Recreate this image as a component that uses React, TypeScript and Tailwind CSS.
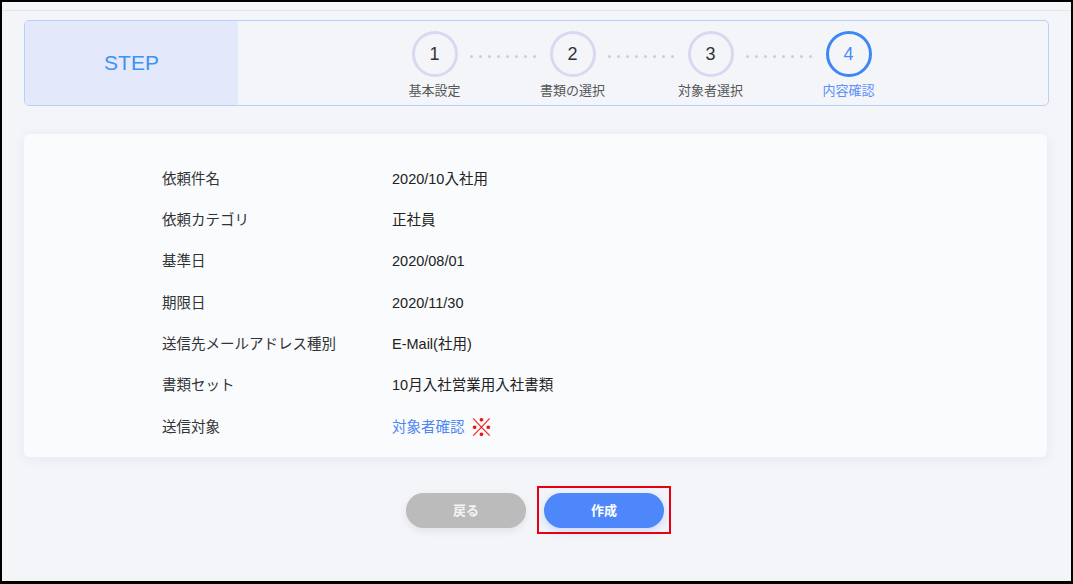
import React from "react";

const steps = [
  { no: 1, label: "基本設定" },
  { no: 2, label: "書類の選択" },
  { no: 3, label: "対象者選択" },
  { no: 4, label: "内容確認" },
];

const rows: Array<{ label: string; value: string; link?: boolean }> = [
  { label: "依頼件名", value: "2020/10入社用" },
  { label: "依頼カテゴリ", value: "正社員" },
  { label: "基準日", value: "2020/08/01" },
  { label: "期限日", value: "2020/11/30" },
  { label: "送信先メールアドレス種別", value: "E-Mail(社用)" },
  { label: "書類セット", value: "10月入社営業用入社書類" },
  { label: "送信対象", value: "対象者確認", link: true },
];

function Dots() {
  return (
    <div className="flex w-[92px] justify-between pl-[12px] pr-[14px] pt-[24px]">
      {Array.from({ length: 8 }).map((_, i) => (
        <span key={i} className="h-[3px] w-[3px] rounded-full bg-[#c9cde0]" />
      ))}
    </div>
  );
}

function StepBar() {
  const current = 4;
  return (
    <div className="flex h-[86px] overflow-hidden rounded-[5px] border border-[#b9cffb]">
      <div className="flex w-[213px] shrink-0 items-center justify-center bg-[#e3e9fb] text-[21px] text-[#3d92f2]">
        STEP
      </div>
      <div className="flex flex-1 items-start justify-center pr-[3px] pt-[10px]">
        {steps.map((s, i) => {
          const active = s.no === current;
          return (
            <React.Fragment key={s.no}>
              {i > 0 && <Dots />}
              <div className="flex w-[46px] flex-col items-center">
                <div
                  className={`flex h-[46px] w-[46px] items-center justify-center rounded-full border-[3px] text-[18px] ${
                    active ? "border-[#3d86f5] text-[#4a8af4]" : "border-[#d6d9ef] text-[#333]"
                  }`}
                >
                  {s.no}
                </div>
                <div
                  className={`mt-[5px] whitespace-nowrap text-[13px] leading-[18px] ${
                    active ? "text-[#5b8ff9]" : "text-[#555]"
                  }`}
                >
                  {s.label}
                </div>
              </div>
            </React.Fragment>
          );
        })}
      </div>
    </div>
  );
}

export default function App() {
  return (
    <div
      className="h-[584px] w-[1073px] overflow-hidden border-b-[3px] border-l-2 border-r-2 border-t-2 border-black bg-[#f4f5f9] text-[#333]"
      style={{ fontFamily: '"Liberation Sans", "Noto Sans CJK JP", sans-serif' }}
    >
      <div className="h-[9px] border-b border-[#e4e6ee]" />

      <div className="px-[22px] pt-[9px]">
        <StepBar />

        {/* Confirmation card */}
        <div className="mt-[28px] w-[1023px] rounded-[6px] bg-[#fafbfd] pb-[9px] pl-[138px] pt-[25px] shadow-[0_2px_14px_rgba(30,40,80,0.06)]">
          {rows.map((r) => (
            <div key={r.label} className="flex h-[41.33px] items-center text-[14.5px]">
              <div className="w-[230px] shrink-0 text-[#333]">{r.label}</div>
              {r.link ? (
                <div className="flex items-center">
                  <span className="text-[#4d87f2]">{r.value}</span>
                  <span className="ml-[5px] text-[24px] leading-none text-[#ee1111]">※</span>
                </div>
              ) : (
                <div className="text-[#222]">{r.value}</div>
              )}
            </div>
          ))}
        </div>

        <div className="mt-[36px] flex justify-center gap-[18px] pr-[3px]">
          <button className="h-[35px] w-[120px] rounded-full bg-[#bbbbbb] text-[13px] font-bold text-[#f4f4f4] shadow-[0_3px_8px_rgba(0,0,0,0.08)]">
            戻る
          </button>
          <div className="relative">
            <button className="h-[35px] w-[120px] rounded-full bg-[#4d87f9] text-[13px] font-bold text-white shadow-[0_3px_10px_rgba(77,135,249,0.25)]">
              作成
            </button>
            <div className="pointer-events-none absolute -bottom-[6px] -left-[7px] -right-[7px] -top-[7px] border-2 border-[#e60012]" />
          </div>
        </div>
      </div>
    </div>
  );
}
